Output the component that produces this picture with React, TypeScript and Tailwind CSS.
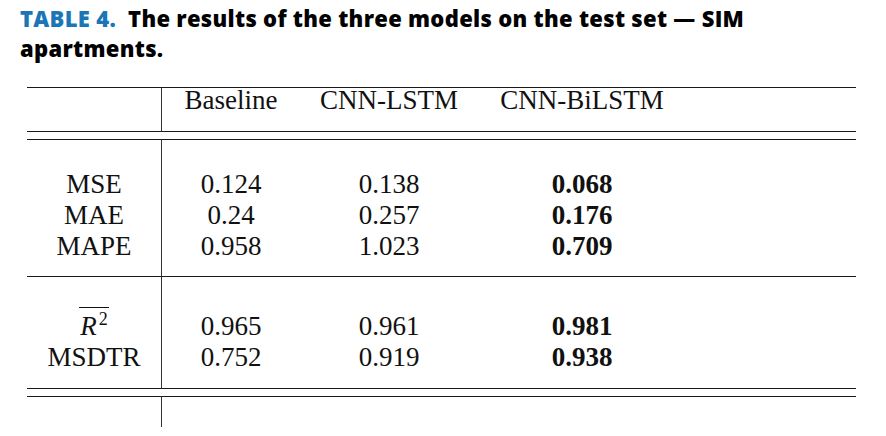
import React from 'react';

const serif = "font-['Liberation_Serif','Times_New_Roman',serif]";

const cols = 'grid grid-cols-[135px_138px_178px_208px_1fr]';

const Rule = () => <div className="h-px bg-[#1a1a1a]" />;

type Section = {
  labels: React.ReactNode[];
  base: string[];
  lstm: string[];
  bilstm: string[];
  pad: string;
};

const sections: Section[] = [
  {
    labels: ['MSE', 'MAE', 'MAPE'],
    base: ['0.124', '0.24', '0.958'],
    lstm: ['0.138', '0.257', '1.023'],
    bilstm: ['0.068', '0.176', '0.709'],
    pad: 'pt-[29px] pb-[14px]',
  },
  {
    labels: [
      <span key="r2" className="inline-block border-t border-[#111] leading-none pt-[2px] px-[1px]">
        <span className="italic">R</span>
        <span className="text-[18px] align-[10px] ml-[2px]">2</span>
      </span>,
      'MSDTR',
    ],
    base: ['0.965', '0.752'],
    lstm: ['0.961', '0.919'],
    bilstm: ['0.981', '0.938'],
    pad: 'pt-[34px] pb-[15px]',
  },
];

const Col = ({ items, bold, pad }: { items: React.ReactNode[]; bold?: boolean; pad: string }) => (
  <div className={`flex flex-col items-center ${pad} ${bold ? 'font-bold' : ''}`}>
    {items.map((v, i) => (
      <div key={i} className="h-[31px] leading-[31px] flex items-end justify-center">
        <span className="leading-[31px]">{v}</span>
      </div>
    ))}
  </div>
);

export default function App() {
  return (
    <div className="w-[886px] h-[436px] bg-white overflow-hidden">
      <p className="pl-[20px] pt-[3px] w-[800px] text-[22px] leading-[30px] font-extrabold font-['Open_Sans',sans-serif] text-black tracking-[0.3px]">
        <span className="text-[#1a76b6]">TABLE 4.&nbsp;&nbsp;</span>
        The results of the three models on the test set — SIM apartments.
      </p>

      <div className={`ml-[27px] mt-[24px] w-[829px] ${serif} text-[27px] text-[#111]`}>
        <Rule />
        <div className={`${cols} h-[43px] leading-[24px]`}>
          <div className="border-r border-[#333]" />
          <div className="text-center">Baseline</div>
          <div className="text-center">CNN-LSTM</div>
          <div className="text-center">CNN-BiLSTM</div>
          <div />
        </div>
        <Rule />
        <div className="h-[7px]" />
        <Rule />

        {sections.map((s, i) => (
          <React.Fragment key={i}>
            {i > 0 && <Rule />}
            <div className={cols}>
              <div className="border-r border-[#333]">
                <Col items={s.labels} pad={s.pad} />
              </div>
              <Col items={s.base} pad={s.pad} />
              <Col items={s.lstm} pad={s.pad} />
              <Col items={s.bilstm} pad={s.pad} bold />
              <div />
            </div>
          </React.Fragment>
        ))}

        <Rule />
        <div className="h-[7px]" />
        <Rule />
        <div className={`${cols} h-[30px]`}>
          <div className="border-r border-[#333]" />
        </div>
      </div>
    </div>
  );
}
